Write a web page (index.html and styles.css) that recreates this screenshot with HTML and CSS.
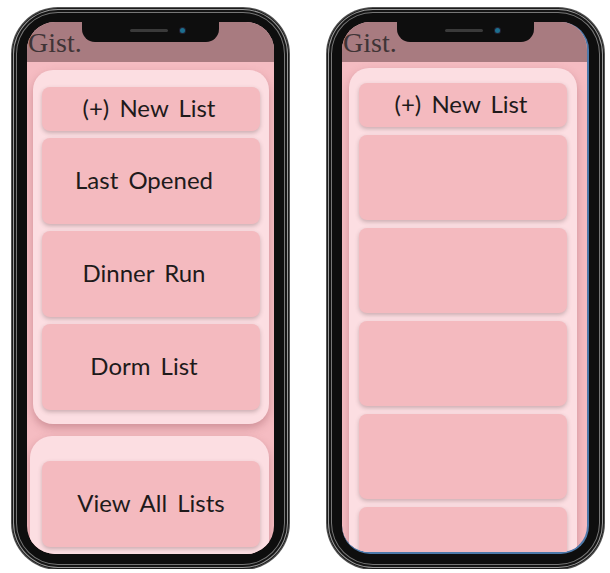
FILE: index.html
```html
<!DOCTYPE html>
<html lang="en">
<head>
    <meta charset="UTF-8">
    <meta name="viewport" content="width=device-width, initial-scale=1.0">
    <title>Gist. - Lists</title>
    <link rel="stylesheet" href="styles.css">
</head>
<body>
    <div class="stage">
        <!-- home screen -->
        <div class="phone">
            <div class="screen">
                <div class="notch"><span class="speaker"></span><span class="camera"></span></div>
                <header class="topbar"><span class="logo">Gist.</span></header>
                <main class="content">
                    <section class="panel panel-home">
                        <button class="tile tile-new">(+) New List</button>
                        <button class="tile tile-list">Last Opened</button>
                        <button class="tile tile-list">Dinner Run</button>
                        <button class="tile tile-list">Dorm List</button>
                    </section>
                    <section class="panel panel-footer">
                        <button class="tile tile-list">View All Lists</button>
                    </section>
                </main>
            </div>
        </div>

        <!-- all lists screen -->
        <div class="phone">
            <div class="screen screen-lists">
                <div class="notch"><span class="speaker"></span><span class="camera"></span></div>
                <header class="topbar"><span class="logo">Gist.</span></header>
                <main class="content">
                    <section class="panel panel-lists">
                        <button class="tile tile-new">(+) New List</button>
                        <button class="tile tile-empty"></button>
                        <button class="tile tile-empty"></button>
                        <button class="tile tile-empty"></button>
                        <button class="tile tile-empty"></button>
                        <button class="tile tile-empty"></button>
                    </section>
                </main>
            </div>
        </div>
    </div>
</body>
</html>
```

FILE: styles.css
```css
* {
    margin: 0;
    padding: 0;
    box-sizing: border-box;
}

body {
    background: #fff;
    font-family: 'Lato', 'Open Sans', sans-serif;
    color: #1e1a1b;
}

.stage {
    display: flex;
    gap: 38px;
    padding: 8px 0 0 12px;
}

/* phone body */
.phone {
    position: relative;
    width: 277px;
    height: 561px;
    padding: 14px 15px;
    background: #0e0e0e;
    border-radius: 46px;
    box-shadow:
        inset 0 0 0 1px #1b1b1b,
        inset 0 0 0 2px #9a9a9a,
        inset 0 0 0 4px #151515,
        inset 0 0 0 5px #777,
        0 0 0 1px #555;
}

.screen {
    position: relative;
    width: 247px;
    height: 532px;
    overflow: hidden;
    border-radius: 28px;
    background: #f5bcc2;
}

.screen-lists {
    border-right: 2px solid #4d79aa;
    border-bottom: 2px solid #4d79aa;
}

.notch {
    position: absolute;
    top: 0;
    left: 55px;
    width: 137px;
    height: 20px;
    background: #0e0e0e;
    border-radius: 0 0 13px 13px;
    z-index: 2;
}

.speaker {
    position: absolute;
    top: 7px;
    left: 48px;
    width: 38px;
    height: 3px;
    border-radius: 2px;
    background: #3a3a3a;
}

.camera {
    position: absolute;
    top: 6px;
    left: 98px;
    width: 5px;
    height: 5px;
    border-radius: 50%;
    background: #1d6f8f;
    box-shadow: 0 0 0 1px #223;
}

.topbar {
    height: 40px;
    background: #a87b80;
    padding: 7px 0 0 1px;
}

.logo {
    font-family: 'Liberation Serif', serif;
    font-size: 28px;
    line-height: 28px;
    color: #3f3436;
}

/* panels + tiles */
.panel {
    display: flex;
    flex-direction: column;
    background: #fcdee2;
    border-radius: 20px;
    box-shadow: 0 4px 8px rgba(160, 90, 100, 0.45);
}

.panel-home {
    margin: 8px 5px 0 6px;
    padding: 17px 9px 14px;
    gap: 7px;
}

.panel-home .tile-list {
    padding-right: 14px;
}

.panel-footer {
    margin: 12px 5px 0 3px;
    padding: 25px 9px 20px 12px;
    border-radius: 22px;
}

.panel-lists {
    margin: 6px 10px 0 7px;
    padding: 15px 10px 20px;
    gap: 8px;
}

.tile {
    display: flex;
    align-items: center;
    justify-content: center;
    border: none;
    border-radius: 8px;
    background: #f4babf;
    box-shadow: 0 2px 4px rgba(90, 60, 64, 0.3);
    font-family: 'Lato', 'Open Sans', sans-serif;
    font-size: 24px;
    font-weight: 400;
    word-spacing: 4px;
    color: #1e1a1b;
    padding-bottom: 3px;
}

.tile-new {
    height: 44px;
    padding-right: 4px;
}

.tile-list {
    height: 86px;
}

.tile-empty {
    height: 85px;
    flex-shrink: 0;
}
```
